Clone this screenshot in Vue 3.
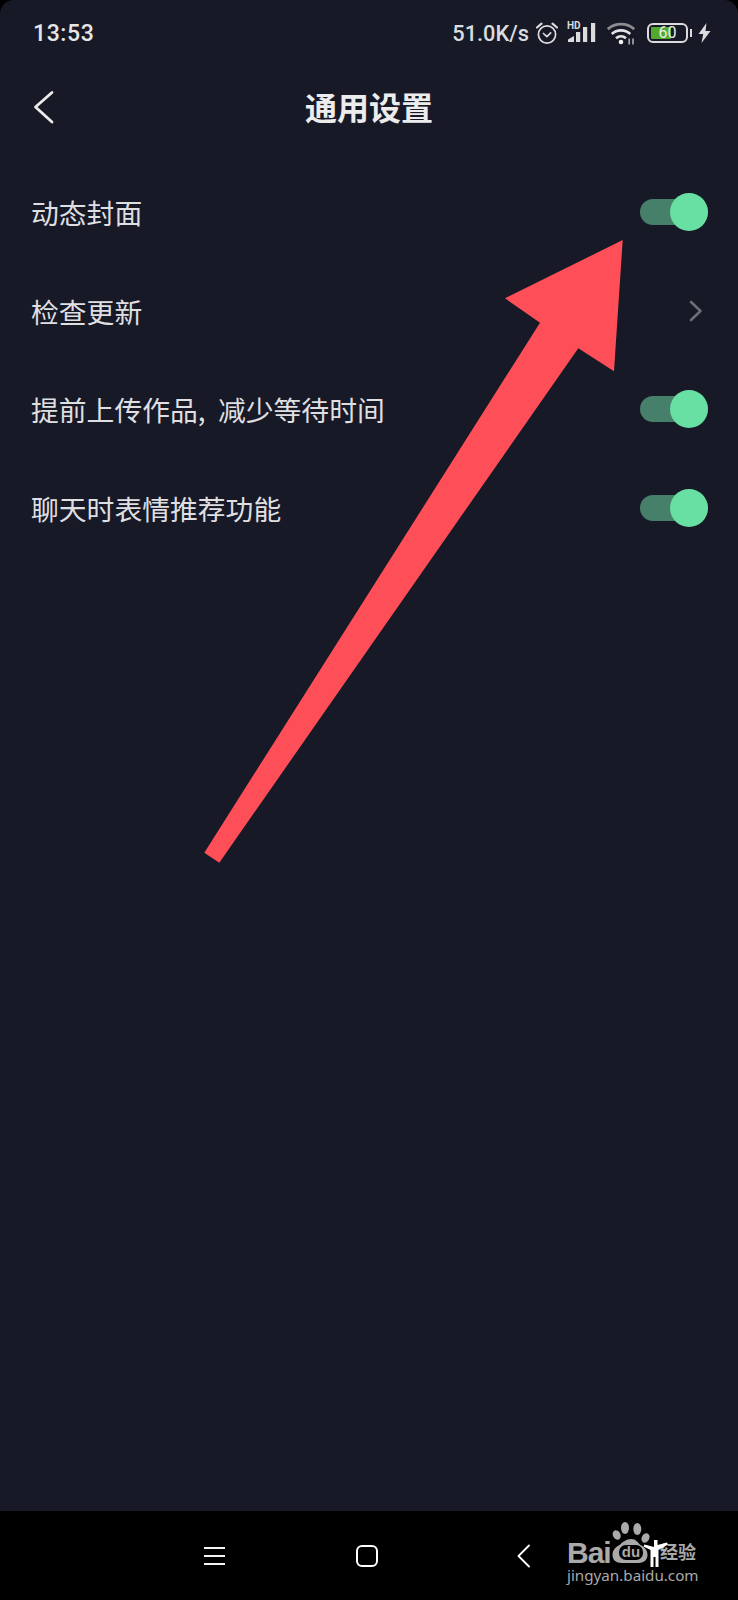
<script setup>
const rows = [
  { label: '动态封面', type: 'toggle' },
  { label: '检查更新', type: 'chevron' },
  { label: '提前上传作品,\u00A0\u00A0减少等待时间', type: 'toggle' },
  { label: '聊天时表情推荐功能', type: 'toggle' },
]
</script>

<template>
  <div class="phone">
    <div class="screen">
      <div class="status">
        <span class="time">13:53</span>
        <div class="status-right">
          <span class="speed">51.0K/s</span>
          <svg class="i-alarm" width="22" height="24" viewBox="0 0 22 24" fill="none" stroke="#dcdcdf">
            <circle cx="11" cy="13.500" r="8.600" stroke-width="1.700" />
            <path d="M7.500 12.500l3.400 3.200 3.800-3.800" stroke-width="1.700" stroke-linecap="round" stroke-linejoin="round" />
            <path d="M1 6.500L5.500 2.600M21 6.500L16.500 2.600" stroke-width="2.200" stroke-linecap="round" />
          </svg>
          <div class="signal">
            <span class="hd">HD</span>
            <svg width="29" height="24" viewBox="0 0 29 24" fill="#dcdcdf">
              <path d="M1 21v-2.500l6-3.500v6zM9 21V11h4.200v10zM16 21V6h4.200v15zM24 21V2h4.200v19z" />
            </svg>
          </div>
          <svg class="i-wifi" width="28" height="24" viewBox="0 0 28 24" fill="none">
            <path d="M0.800 8.200C8 1.500 20 1.500 27.200 8.200" stroke="#8b8c91" stroke-width="2.800" />
            <path d="M4.800 13C10 8.200 18 8.200 23.200 13" stroke="#e4e4e6" stroke-width="2.600" />
            <path d="M9 17.200c3-2.600 7-2.600 10 0" stroke="#e4e4e6" stroke-width="2.600" />
            <circle cx="14" cy="21" r="2.300" fill="#f0f0f0" />
            <path d="M22.200 23.500v-6M26 23.500v-6" stroke="#a5a6aa" stroke-width="1.700" />
          </svg>
          <div class="battery">
            <div class="batt-body">
              <div class="batt-fill"></div>
              <span class="batt-num">60</span>
            </div>
            <div class="batt-nub"></div>
          </div>
          <svg class="i-bolt" width="13" height="20" viewBox="0 0 13 20" fill="#dcdcdf">
            <path d="M8.500 0L0.500 11h4.700L3.500 20l9-12H7.500z" />
          </svg>
        </div>
      </div>

      <header class="header">
        <svg class="back" width="24" height="36" viewBox="0 0 24 36" fill="none">
          <path d="M20 3.500L3.500 18 20 33" stroke="#ececed" stroke-width="2.800" stroke-linecap="round" stroke-linejoin="round" />
        </svg>
        <h1 class="title">通用设置</h1>
      </header>

      <ul class="list">
        <li v-for="row in rows" :key="row.label" class="row">
          <span class="label">{{ row.label }}</span>
          <div v-if="row.type === 'toggle'" class="toggle">
            <span class="knob"></span>
          </div>
          <svg v-else class="chev" width="14" height="22" viewBox="0 0 14 22" fill="none">
            <path d="M2 2l9.500 9L2 20" stroke="#6c6e76" stroke-width="2.600" stroke-linecap="round" stroke-linejoin="round" />
          </svg>
        </li>
      </ul>

      <nav class="nav">
        <div class="burger"><span></span><span></span><span></span></div>
        <div class="home"></div>
        <svg class="nav-back" width="14" height="24" viewBox="0 0 14 24" fill="none">
          <path d="M12 1.500L1.500 12 12 22.500" stroke="#fff" stroke-width="1.800" stroke-linecap="round" stroke-linejoin="round" />
        </svg>
      </nav>
    </div>

    <svg class="arrow" width="738" height="1600" viewBox="0 0 738 1600">
      <polygon points="622.700,240 505,298.300 540,322.700 204.300,852.700 219.300,862.700 578.300,348.300 614,371.300" fill="#fe4f58" />
    </svg>

    <div class="watermark">
      <div class="wm-top">
        <span class="wm-bai">Bai</span>
        <svg class="wm-paw" width="38" height="41" viewBox="0 0 38 41" fill="#aaaaaa">
          <ellipse cx="4.700" cy="13" rx="3.800" ry="5" transform="rotate(-25 4.700 13)" />
          <ellipse cx="13" cy="6" rx="4" ry="6" />
          <ellipse cx="25.300" cy="7" rx="4" ry="6" />
          <ellipse cx="33.500" cy="16" rx="3.800" ry="5" transform="rotate(25 33.500 16)" />
          <path d="M19.500 17c4 0 6 3 9 6 4 2 7 5 7 10 0 5-4 8-9 8H10c-6 0-9.500-3-9.500-8 0-5 3-8 7-10 3-3 7-6 12-6z" />
        </svg>
        <span class="wm-du">du</span>
        <span class="wm-cn">经验</span>
        <svg class="wm-man" width="25" height="27" viewBox="0 0 25 27" fill="#fff">
          <path d="M11 0h3.500v5L24 2.500l1 2-9.500 5.500v17h-3v-10h-2v10h-3V10L0.500 6.500 1.500 4.500l9.500 2.500z" />
        </svg>
      </div>
      <div class="wm-url">jingyan.baidu.com</div>
    </div>
  </div>
</template>

<style>
html, body { margin: 0; background: #000; }
</style>

<style scoped>
.phone {
  position: relative;
  width: 738px;
  height: 1600px;
  background: #000;
  overflow: hidden;
  font-family: "Noto Sans CJK SC", "Noto Sans", sans-serif;
}
.screen {
  width: 738px;
  height: 1600px;
  display: flex;
  flex-direction: column;
  background: #171a26;
  border-radius: 14px 14px 0 0;
  overflow: hidden;
}
.status {
  height: 66px;
  flex: none;
  display: flex;
  align-items: center;
  justify-content: space-between;
  padding: 0 27px 0 33px;
  box-sizing: border-box;
  color: #e6e6e8;
}
.time {
  font-family: Roboto, sans-serif;
  font-size: 23px;
  font-weight: 500;
  letter-spacing: 0.6px;
}
.status-right {
  display: flex;
  align-items: center;
}
.speed {
  font-family: Roboto, sans-serif;
  font-size: 21.800px;
  font-weight: 500;
  color: #dcdcdf;
  margin-right: 7px;
}
.i-alarm { margin-right: 9px; }
.signal {
  position: relative;
  width: 29px;
  height: 24px;
  margin-right: 11px;
}
.signal svg { display: block; }
.hd {
  position: absolute;
  left: 0;
  top: 0;
  font-family: Roboto, sans-serif;
  font-size: 10px;
  font-weight: 700;
  line-height: 10px;
  color: #dcdcdf;
}
.i-wifi { margin-right: 12px; }
.battery {
  display: flex;
  align-items: center;
  margin-right: 6px;
}
.batt-body {
  position: relative;
  box-sizing: border-box;
  width: 41px;
  height: 20px;
  border: 2px solid #dcdcdf;
  border-radius: 6px;
  padding: 2px;
}
.batt-fill {
  width: 60%;
  height: 100%;
  background: #55a82e;
  border-radius: 1px;
}
.batt-num {
  position: absolute;
  inset: 0;
  display: flex;
  align-items: center;
  justify-content: center;
  font-family: Roboto, sans-serif;
  font-size: 16px;
  line-height: 16px;
  color: #e8f2e2;
}
.batt-nub {
  width: 2px;
  height: 8px;
  margin-left: 2px;
  background: #dcdcdf;
}
.header {
  position: relative;
  height: 80px;
  flex: none;
  display: flex;
  align-items: center;
  justify-content: center;
}
.back {
  position: absolute;
  left: 32px;
  top: 23px;
}
.title {
  margin: 0;
  font-size: 32px;
  font-weight: 700;
  line-height: 44px;
  color: #ececed;
}
.list {
  list-style: none;
  margin: 0;
  padding: 17px 0 0;
  flex: 1;
}
.row {
  height: 98.600px;
  display: flex;
  align-items: center;
  justify-content: space-between;
  padding: 0 30px 0 31px;
}
.label {
  font-size: 27.800px;
  font-weight: 400;
  line-height: 40px;
  color: #dfdfe2;
}
.toggle {
  position: relative;
  width: 68px;
  height: 26px;
  background: #47806a;
  border-radius: 13px;
}
.knob {
  position: absolute;
  right: 0;
  top: -6px;
  width: 38px;
  height: 38px;
  border-radius: 50%;
  background: #68dfa3;
}
.chev {
  margin-right: 5px;
}
.nav {
  height: 89px;
  flex: none;
  background: #000;
  position: relative;
  display: flex;
  align-items: center;
  padding-left: 204px;
  box-sizing: border-box;
}
.burger {
  width: 21px;
  display: flex;
  flex-direction: column;
  gap: 6px;
}
.burger span {
  display: block;
  height: 2px;
  background: #f4f4f4;
}
.home {
  box-sizing: border-box;
  width: 22px;
  height: 22px;
  margin-left: 131px;
  border: 2px solid #fff;
  border-radius: 6px;
}
.nav-back { margin-left: 139px; }
.arrow {
  position: absolute;
  left: 0;
  top: 0;
  pointer-events: none;
}
.watermark {
  position: absolute;
  left: 567px;
  top: 1522px;
  width: 135px;
  height: 70px;
}
.wm-top {
  position: relative;
  height: 44px;
}
.wm-bai {
  position: absolute;
  left: 0;
  top: 17.600px;
  font-family: "Liberation Sans", sans-serif;
  font-size: 30px;
  font-weight: 700;
  line-height: 26px;
  letter-spacing: -1px;
  color: #aaaaaa;
}
.wm-paw {
  position: absolute;
  left: 45px;
  top: 0;
}
.wm-du {
  position: absolute;
  left: 52px;
  top: 23px;
  width: 24px;
  height: 15px;
  border-radius: 7px;
  background: #000;
  text-align: center;
  font-family: "Liberation Sans", sans-serif;
  font-size: 15px;
  font-weight: 700;
  line-height: 14px;
  color: #aaaaaa;
}
.wm-cn {
  position: absolute;
  left: 93px;
  top: 15px;
  font-size: 18px;
  font-weight: 700;
  line-height: 28px;
  color: #aaaaaa;
}
.wm-man {
  position: absolute;
  left: 76px;
  top: 18px;
}
.wm-url {
  font-family: "Noto Sans", sans-serif;
  font-size: 15.200px;
  line-height: 18px;
  color: #aaaaaa;
}
</style>
